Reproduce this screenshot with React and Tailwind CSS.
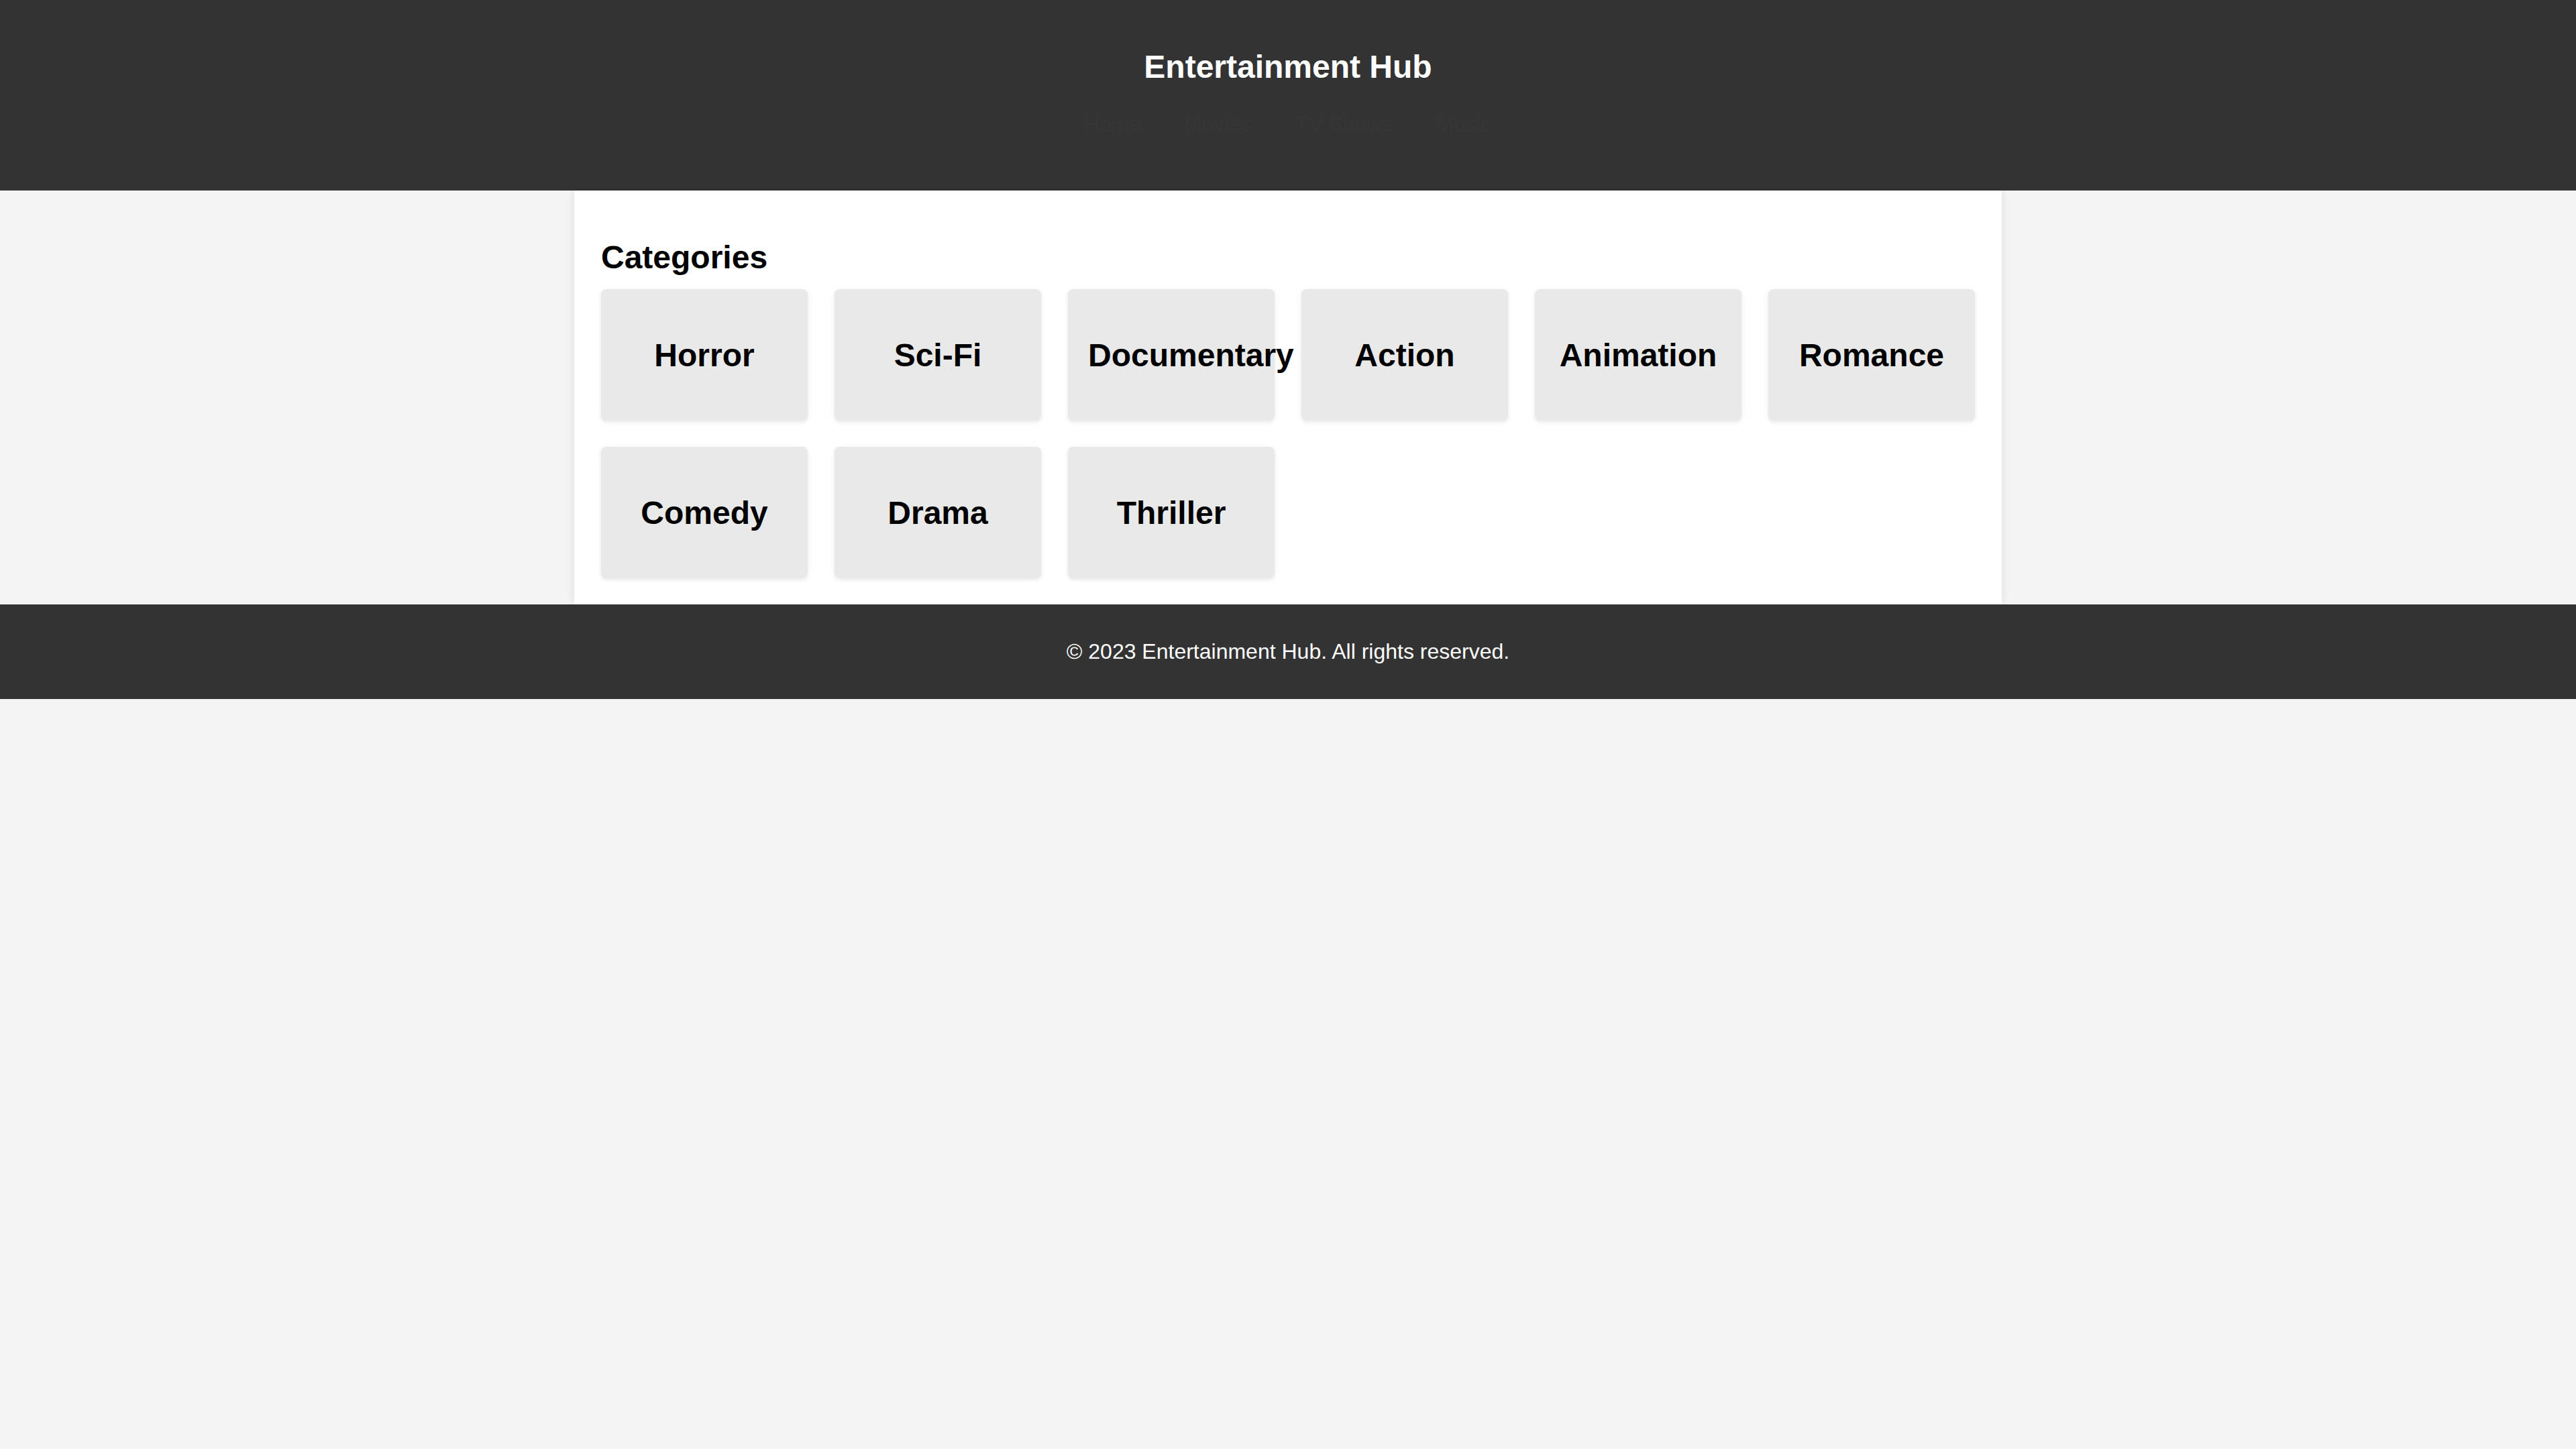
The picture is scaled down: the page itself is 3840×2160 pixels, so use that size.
import React from 'react'

const categories = ['Horror', 'Sci-Fi', 'Documentary', 'Action', 'Animation', 'Romance', 'Comedy', 'Drama', 'Thriller']
const links = ['Home', 'Movies', 'TV Shows', 'Music']

export default function App() {
  return (
    <div className="min-h-screen bg-[#f4f4f4] text-black" style={{ fontFamily: '"Liberation Sans", Arial, sans-serif' }}>
      {/* HEADER */}
      <header className="bg-[#333333] text-white text-center pt-[72px] pb-[80px]">
        <h1 className="text-[48px] leading-[55px] font-bold">Entertainment Hub</h1>
        <nav className="mt-[40px] flex justify-center gap-[64px] text-[32px] leading-[37px] text-[#363636]">
          {links.map((l) => (
            <a key={l} href="#">{l}</a>
          ))}
        </nav>
      </header>

      {/* MAIN */}
      <main className="w-[2128px] mx-auto bg-white px-[40px] pt-[72px] pb-[39px] shadow-[0_0_12px_rgba(0,0,0,0.1)]">
        <h2 className="text-[48px] leading-[55px] font-bold mb-[20px]">Categories</h2>
        <div className="grid grid-cols-6 gap-x-[40px] gap-y-[39px]">
          {categories.map((c) => (
            <div
              key={c}
              className="h-[196px] px-[30px] flex flex-col justify-center bg-[#e9e9e9] rounded-[8px] shadow-[0_2px_6px_rgba(0,0,0,0.1)]"
            >
              <h3 className="text-center text-[48px] leading-[55px] font-bold whitespace-nowrap">{c}</h3>
            </div>
          ))}
        </div>
      </main>

      {/* FOOTER */}
      <footer className="bg-[#333333] text-white text-center py-[52px]">
        <p className="text-[32px] leading-[37px]">© 2023 Entertainment Hub. All rights reserved.</p>
      </footer>
    </div>
  )
}
